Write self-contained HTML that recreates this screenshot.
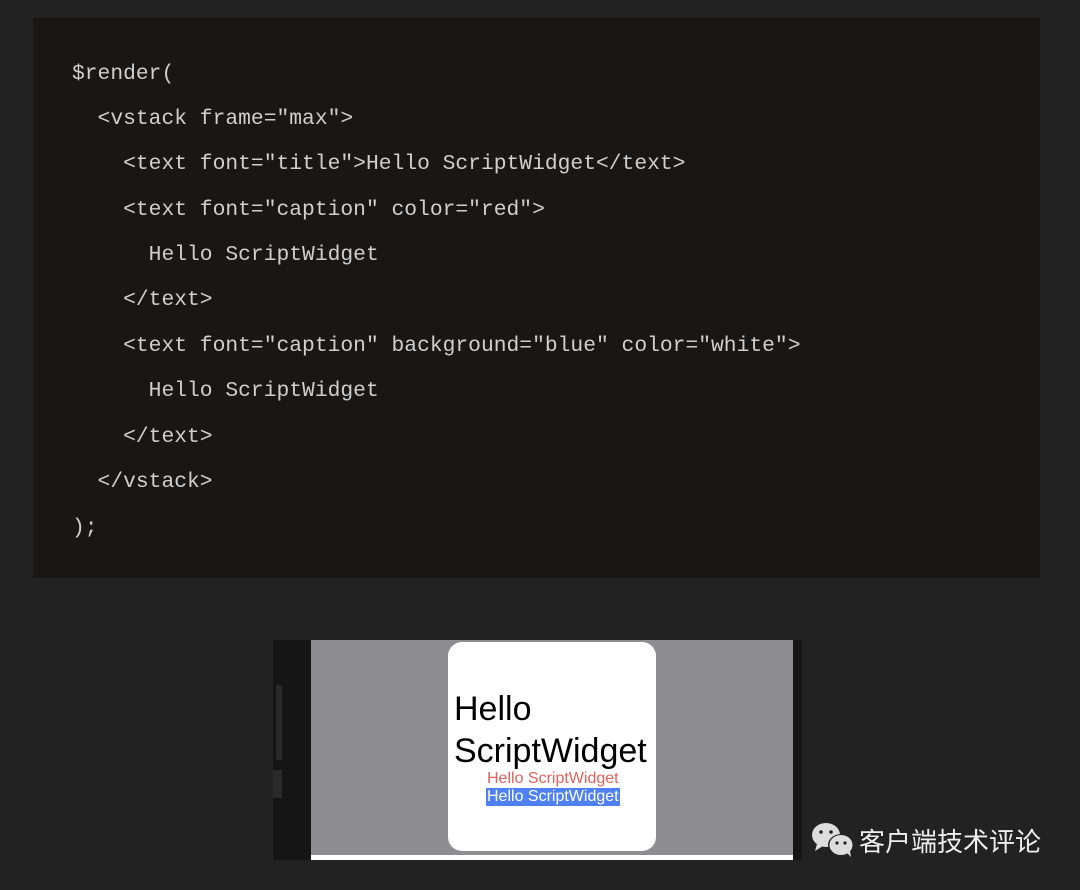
<!DOCTYPE html>
<html><head><meta charset="utf-8"><style>
body{margin:0;width:1080px;height:890px;background:#222222;position:relative;overflow:hidden;font-family:"Liberation Sans","Noto Sans CJK SC",sans-serif}
.code{position:absolute;left:33px;top:18px;width:1007px;height:560px;background:#181716}
.l{position:absolute;left:39px;font-family:"Liberation Mono",monospace;font-size:21.3px;color:#cfcfcf;white-space:pre;line-height:24px}
.shot{position:absolute;left:273px;top:640px;width:529px;height:220px;background:#151515}
.gray{position:absolute;left:38px;top:0;width:482px;height:215px;background:#8e8e92}
.white{position:absolute;left:38px;top:215px;width:482px;height:5px;background:#fff}
.card{position:absolute;left:137px;top:2px;width:208px;height:209px;background:#fff;border-radius:14px}
</style></head><body>
<div class="code">
<div class="l" style="top:44px">$render(</div>
<div class="l" style="top:89px">  &lt;vstack frame="max"&gt;</div>
<div class="l" style="top:134px">    &lt;text font="title"&gt;Hello ScriptWidget&lt;/text&gt;</div>
<div class="l" style="top:180px">    &lt;text font="caption" color="red"&gt;</div>
<div class="l" style="top:225px">      Hello ScriptWidget</div>
<div class="l" style="top:270px">    &lt;/text&gt;</div>
<div class="l" style="top:316px">    &lt;text font="caption" background="blue" color="white"&gt;</div>
<div class="l" style="top:361px">      Hello ScriptWidget</div>
<div class="l" style="top:407px">    &lt;/text&gt;</div>
<div class="l" style="top:452px">  &lt;/vstack&gt;</div>
<div class="l" style="top:498px">);</div>
</div>
<div class="shot">
<div style="position:absolute;left:3px;top:45px;width:6px;height:75px;background:#2a2a2a;border-radius:2px"></div>
<div style="position:absolute;left:0;top:130px;width:9px;height:28px;background:#2a2a2a"></div>
<div class="gray"><div class="card">
<div style="position:absolute;left:6px;top:46px;font-size:34px;line-height:42px;color:#000;white-space:nowrap">Hello<br>ScriptWidget</div>
<div style="position:absolute;left:39px;top:128px;font-size:16px;line-height:18px;color:#e0625a;white-space:nowrap">Hello ScriptWidget</div>
<div style="position:absolute;left:38px;top:146px;font-size:16px;line-height:18px;color:#fff;background:#4f80f4;padding:0 1px;white-space:nowrap">Hello ScriptWidget</div>
</div></div>
<div class="white"></div>
</div>
<svg style="position:absolute;left:811px;top:822px" width="44" height="36" viewBox="0 0 44 36">
<ellipse cx="15" cy="13" rx="14" ry="12" fill="#ddd"/><path d="M6 22 L4 29 L12 24Z" fill="#ddd"/>
<circle cx="10" cy="10" r="1.8" fill="#222"/><circle cx="20" cy="10" r="1.8" fill="#222"/>
<ellipse cx="30" cy="23" rx="13" ry="11" fill="#222"/>
<ellipse cx="30" cy="23" rx="11.5" ry="10" fill="#ddd"/><path d="M36 31 L40 35 L39 29Z" fill="#ddd"/>
<circle cx="26" cy="21" r="1.6" fill="#222"/><circle cx="34" cy="21" r="1.6" fill="#222"/>
</svg>
<div style="position:absolute;left:859px;top:824px;font-size:26px;line-height:34px;color:#eee;font-family:'Noto Sans CJK SC',sans-serif">客户端技术评论</div>
</body></html>
